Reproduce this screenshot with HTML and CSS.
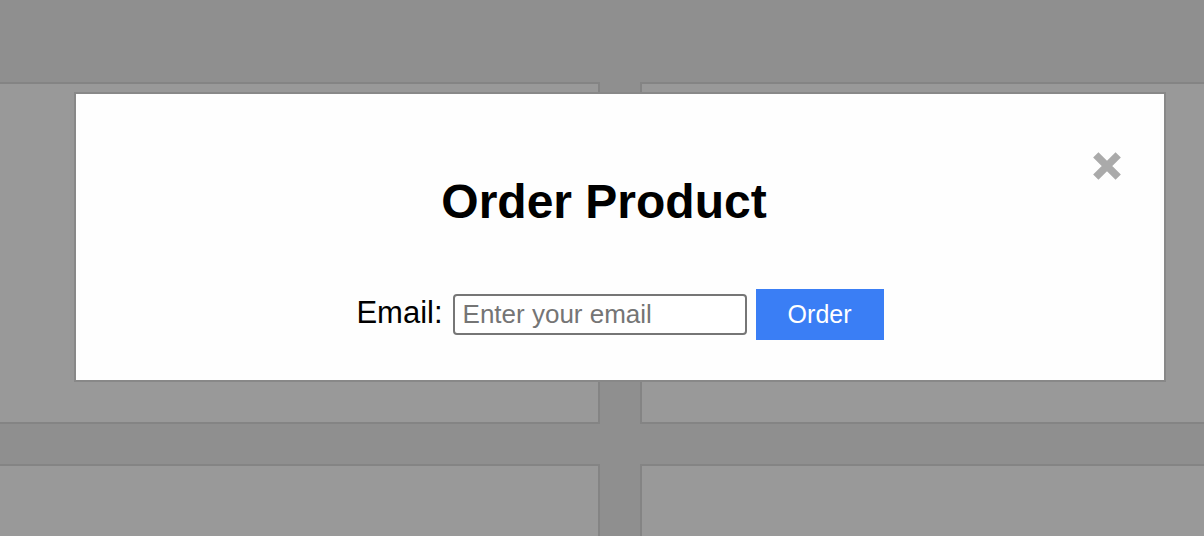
FILE: index.html
```html
<!DOCTYPE html>
<html>
<head>
<meta charset="utf-8">
<title>Order Product</title>
<link rel="stylesheet" href="styles.css">
</head>
<body>
<div class="grid">
  <div class="card"></div>
  <div class="card"></div>
  <div class="card"></div>
  <div class="card"></div>
</div>
<div class="overlay"></div>
<div class="modal">
  <div class="modal-head">
    <h2 class="title">Order Product</h2>
    <button class="close" aria-label="Close">
      <svg width="28" height="28" viewBox="0 0 28 28"><path d="M2.8 2.8 L25.2 25.2 M25.2 2.8 L2.8 25.2" stroke="#aaaaaa" stroke-width="7.5" fill="none"/></svg>
    </button>
  </div>
  <form class="order-row">
    <label class="label" for="email">Email:</label>
    <input class="email" id="email" type="email" placeholder="Enter your email">
    <button class="order" type="button">Order</button>
  </form>
</div>
</body>
</html>
```
FILE: styles.css
```css
html, body {
  margin: 0;
  padding: 0;
}
body {
  background: #eeeeee;
  width: 1204px;
  height: 536px;
  overflow: hidden;
  font-family: "Liberation Sans", Arial, sans-serif;
}
.grid {
  display: grid;
  grid-template-columns: 620px 600px;
  grid-auto-rows: 342px;
  column-gap: 40px;
  row-gap: 40px;
  padding-top: 82px;
  margin-left: -20px;
}
.card {
  background: #ffffff;
  border: 2px solid #dddddd;
}
.overlay {
  position: fixed;
  inset: 0;
  background: rgba(0, 0, 0, 0.4);
}
.modal {
  position: absolute;
  left: 74px;
  top: 92px;
  width: 1008px;
  padding: 40px;
  background: #fefefe;
  border: 2px solid #888888;
}
.modal-head {
  display: flex;
  align-items: flex-start;
}
.title {
  flex: 1;
  margin: 40px 0 0 0;
  font-size: 48px;
  line-height: 56px;
  font-weight: bold;
  text-align: center;
  color: #000;
}
.close {
  width: 32px;
  height: 28px;
  margin-top: 18px;
  padding: 0 0 0 1px;
  border: 0;
  background: none;
  display: flex;
  align-items: flex-start;
  justify-content: flex-start;
}
.close svg {
  display: block;
}
.order-row {
  display: flex;
  align-items: center;
  justify-content: center;
  margin: 59px 0 0 0;
  height: 51px;
}
.label {
  font-size: 31px;
  color: #000;
  margin-right: 10px;
  margin-bottom: 3px;
}
.email {
  box-sizing: border-box;
  width: 294px;
  height: 41px;
  border: 2px solid #767676;
  border-radius: 4px;
  padding: 0 8px;
  font-family: "Liberation Sans", Arial, sans-serif;
  font-size: 26px;
  color: #000;
  background: #fff;
  outline: none;
}
.email::placeholder {
  color: #757575;
}
.order {
  margin-left: 9px;
  width: 128px;
  height: 51px;
  border: 0;
  background: #3a7ef5;
  color: #fff;
  font-family: "Liberation Sans", Arial, sans-serif;
  font-size: 25px;
  padding: 0;
}
```
